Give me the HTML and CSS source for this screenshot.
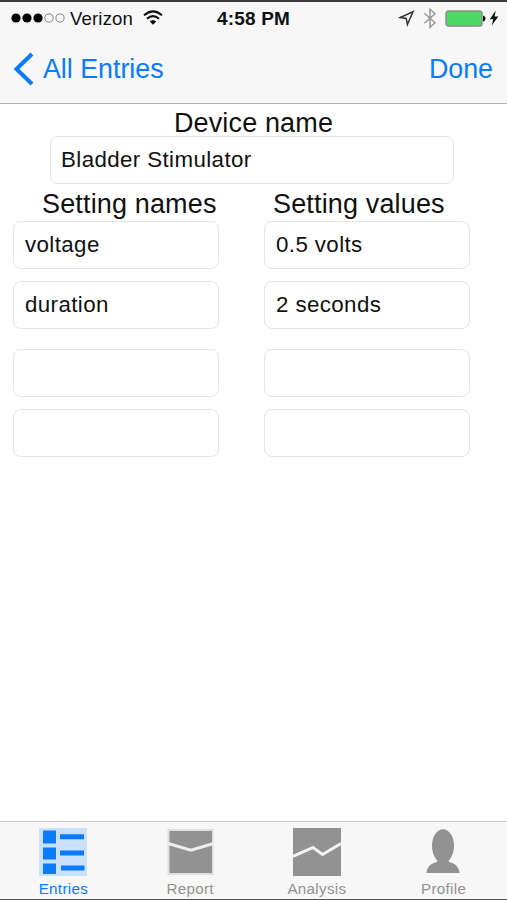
FILE: index.html
```html
<!DOCTYPE html>
<html lang="en">
<head>
<meta charset="utf-8">
<title>Device settings</title>
<link rel="stylesheet" href="styles.css">
</head>
<body>
<div class="app">
  <header class="header">
    <div class="status">
      <div class="status-left">
        <svg class="signal" width="54" height="12" viewBox="0 0 54 12"><g fill="#000"><circle cx="5" cy="6" r="4.6"/><circle cx="16" cy="6" r="4.6"/><circle cx="27" cy="6" r="4.6"/></g><g fill="none" stroke="#888" stroke-width="1"><circle cx="38" cy="6" r="4.1"/><circle cx="49" cy="6" r="4.1"/></g></svg>
        <span class="carrier">Verizon</span>
        <svg class="wifi" width="20" height="16" viewBox="0 0 20 16" fill="none" stroke="#111" stroke-width="2.1"><path d="M1 5.3Q10-2.7 19 5.3M4 8.8Q10 3.6 16 8.8"/><path d="M6.8 11.5Q10 8.5 13.2 11.5L10 14.7Z" fill="#111" stroke="none"/></svg>
      </div>
      <span class="time">4:58 PM</span>
      <div class="status-right">
        <svg width="17" height="17" viewBox="0 0 17 17" fill="none" stroke="#333" stroke-width="1.5"><path d="M15 1.8 2 7.6 8.2 8.5 9.4 14.5Z"/></svg>
        <svg width="14" height="21" viewBox="0 0 14 21" fill="none" stroke="#999" stroke-width="1.5"><path d="M1.5 5.3 12 14.7 7 19.3V1.3L12 5.7 1.5 15.3"/></svg>
        <svg width="41" height="17" viewBox="0 0 41 17"><rect x="1" y="1" width="36" height="15" rx="2.5" fill="#4cd964" stroke="#8b8b8b" stroke-width="1.4"/><path d="M38 5.5Q40.5 6 40.5 8.5T38 11.5Z" fill="#111"/></svg>
        <svg class="bolt" width="10" height="16" viewBox="0 0 10 16"><path d="M6.7.5.8 9.2H4.2L2.8 15.5 9.3 6.5H5.6Z" fill="#111"/></svg>
      </div>
    </div>
    <nav class="nav">
      <a class="back"><svg width="22" height="34" viewBox="0 0 22 34" fill="none" stroke="#087bff" stroke-width="4"><path d="M20 2 4.5 17 20 32"/></svg><span>All Entries</span></a>
      <a class="done">Done</a>
    </nav>
  </header>
  <main class="main">
    <h1 class="label device-label">Device name</h1>
    <div class="field device">Bladder Stimulator</div>
    <div class="columns">
      <section class="column">
        <h2 class="label names">Setting names</h2>
        <div class="field">voltage</div>
        <div class="field second">duration</div>
        <div class="field third"></div>
        <div class="field fourth"></div>
      </section>
      <section class="column">
        <h2 class="label values">Setting values</h2>
        <div class="field">0.5 volts</div>
        <div class="field second">2 seconds</div>
        <div class="field third"></div>
        <div class="field fourth"></div>
      </section>
    </div>
  </main>
  <footer class="tabs">
    <a class="tab active"><svg width="48" height="48" viewBox="0 0 48 48"><path fill="#c9e1fb" d="M0 0H48V48H0Z"/><path fill="#087bff" d="M4 2.5H17V15.5H4ZM4 19.5H17V31.5H4ZM4 35.5H17V46H4Z"/><path d="M21 8.7H45M21 25H45M22 40H45.5" stroke="#087bff" stroke-width="5"/></svg><span>Entries</span></a>
    <a class="tab report"><svg width="48" height="48" viewBox="0 0 48 48"><path fill="#dedede" d="M1.5 1H47.5V47H1.5Z"/><path fill="#929292" d="M3.5 3H46V45H3.5Z"/><path d="M2 15.5 25 22.3 47.5 15.5" fill="none" stroke="#eee" stroke-width="3"/></svg><span>Report</span></a>
    <a class="tab"><svg width="48" height="48" viewBox="0 0 48 48"><path fill="#929292" d="M0 0H48V48H0Z"/><path d="M0 28.5 20 19.5 29.5 26.5 48 15.5" fill="none" stroke="#f4f4f4" stroke-width="3"/></svg><span>Analysis</span></a>
    <a class="tab"><svg width="48" height="48" viewBox="0 0 48 48" fill="#929292"><ellipse cx="23" cy="18" rx="11" ry="16.8"/><path d="M6.5 45C7 38 12 35 17 34L18 29H28L29 34C34 35 39 38 39.5 45Z"/></svg><span>Profile</span></a>
  </footer>
</div>
</body>
</html>
```
FILE: styles.css
```css
* { box-sizing: border-box; }
body { margin: 0; background: #fff; color: #111; font-family: "Liberation Sans", Arial, sans-serif; }
svg { display: block; flex: none; }
.app { width: 507px; height: 900px; display: flex; flex-direction: column; overflow: hidden; border-top: 2px solid #3c3a3c; border-bottom: 1px solid #555; }
.header { height: 102px; flex: none; background: #f7f7f7; border-bottom: 1px solid #b7b7b7; }
.status { height: 32px; display: grid; grid-template-columns: 1fr auto 1fr; align-items: center; padding: 0 8px 0 11px; }
.status-left, .status-right { display: flex; align-items: center; }
.status-right { justify-content: flex-end; gap: 8px; }
.bolt { margin-left: -5px; }
.carrier { margin-left: 5px; font-size: 18.6px; line-height: 22px; letter-spacing: .15px; padding-top: 1px; }
.wifi { margin-left: 10px; }
.time { font-size: 19px; font-weight: bold; line-height: 22px; letter-spacing: .2px; margin-left: -3px; padding-top: 1px; }
.nav { height: 69px; display: flex; justify-content: space-between; align-items: center; padding: 0 14px 0 12px; color: #087bff; font-size: 26.8px; line-height: 32px; }
.back { display: flex; align-items: center; gap: 9px; }
.main { flex: 1; padding-top: 3px; }
.label { margin: 0; font-size: 27px; font-weight: normal; line-height: 32px; height: 33px; white-space: nowrap; letter-spacing: .15px; }
.device-label { text-align: center; }
.field { height: 48px; border: 1.5px solid #e5e5e5; border-radius: 8px; padding: 0 10px; font-size: 22.3px; line-height: 45px; letter-spacing: .4px; background: #fff; }
.column .field { padding-left: 11px; }
.device { width: 404px; margin-left: 50px; margin-top: -4px; }
.columns { display: grid; grid-template-columns: 206px 206px; column-gap: 45px; padding-left: 13px; margin-top: 4px; }
.names { padding-left: 29px; }
.values { padding-left: 9px; }
.second { margin-top: 12px; }
.third { margin-top: 20px; }
.fourth { margin-top: 12px; }
.tabs { height: 78px; flex: none; display: grid; grid-template-columns: repeat(4, 1fr); background: #f7f7f7; border-top: 1px solid #ccc; }
.tab { display: flex; flex-direction: column; align-items: center; padding-top: 6px; color: #929292; font-size: 15.2px; line-height: 18px; letter-spacing: .3px; }
.tab span { margin-top: 4px; }
.active { color: #087bff; }
```
